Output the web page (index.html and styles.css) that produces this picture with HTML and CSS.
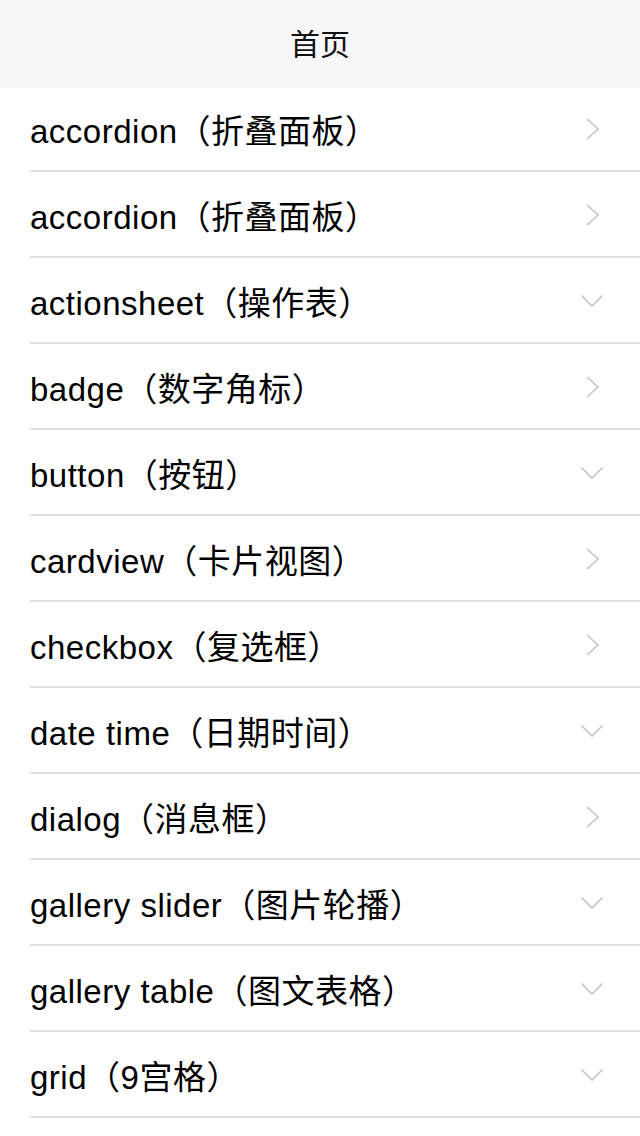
FILE: index.html
```html
<!DOCTYPE html>
<html lang="zh-CN">
<head>
<meta charset="utf-8">
<title>首页</title>
<link rel="stylesheet" href="styles.css">
</head>
<body>
<header class="bar"><h1 class="title">首页</h1></header>
<ul class="list">
  <li class="item"><span class="label">accordion（折叠面板）</span><svg class="chev" viewBox="0 0 24 24"><path d="M7 2 L18 12 L7 22"/></svg></li>
  <li class="item"><span class="label">accordion（折叠面板）</span><svg class="chev" viewBox="0 0 24 24"><path d="M7 2 L18 12 L7 22"/></svg></li>
  <li class="item"><span class="label">actionsheet（操作表）</span><svg class="chev" viewBox="0 0 24 24"><path d="M1.5 6.5 L12 17 L22.5 6.5"/></svg></li>
  <li class="item"><span class="label">badge（数字角标）</span><svg class="chev" viewBox="0 0 24 24"><path d="M7 2 L18 12 L7 22"/></svg></li>
  <li class="item"><span class="label">button（按钮）</span><svg class="chev" viewBox="0 0 24 24"><path d="M1.5 6.5 L12 17 L22.5 6.5"/></svg></li>
  <li class="item"><span class="label">cardview（卡片视图）</span><svg class="chev" viewBox="0 0 24 24"><path d="M7 2 L18 12 L7 22"/></svg></li>
  <li class="item"><span class="label">checkbox（复选框）</span><svg class="chev" viewBox="0 0 24 24"><path d="M7 2 L18 12 L7 22"/></svg></li>
  <li class="item"><span class="label">date time（日期时间）</span><svg class="chev" viewBox="0 0 24 24"><path d="M1.5 6.5 L12 17 L22.5 6.5"/></svg></li>
  <li class="item"><span class="label">dialog（消息框）</span><svg class="chev" viewBox="0 0 24 24"><path d="M7 2 L18 12 L7 22"/></svg></li>
  <li class="item"><span class="label">gallery slider（图片轮播）</span><svg class="chev" viewBox="0 0 24 24"><path d="M1.5 6.5 L12 17 L22.5 6.5"/></svg></li>
  <li class="item"><span class="label">gallery table（图文表格）</span><svg class="chev" viewBox="0 0 24 24"><path d="M1.5 6.5 L12 17 L22.5 6.5"/></svg></li>
  <li class="item"><span class="label">grid（9宫格）</span><svg class="chev" viewBox="0 0 24 24"><path d="M1.5 6.5 L12 17 L22.5 6.5"/></svg></li>
</ul>
</body>
</html>
```
FILE: styles.css
```css
html, body {
  margin: 0;
  padding: 0;
  background: #ffffff;
  font-family: "Liberation Sans", Arial, "Noto Sans CJK SC", sans-serif;
  color: #000;
  overflow: hidden;
}
.bar {
  height: 88px;
  background: #f7f7f7;
  display: flex;
  align-items: center;
  justify-content: center;
  padding-bottom: 4px;
  box-sizing: border-box;
}
.title {
  margin: 0;
  font-size: 30px;
  font-weight: normal;
  font-family: "Noto Sans CJK SC", sans-serif;
  color: #111;
}
.list {
  list-style: none;
  margin: 0;
  padding: 0 0 0 30px;
}
.item {
  border-bottom: 2px solid #e0e0e0;
  display: flex;
  align-items: center;
  padding: 2px 0 0 0;
  box-sizing: border-box;
  height: 86px;
}
.item:first-child {
  height: 84px;
  padding-top: 0;
}
.label {
  flex: 1;
  font-size: 33px;
  letter-spacing: 0.5px;
  white-space: nowrap;
}
.chev {
  width: 24px;
  height: 24px;
  margin-right: 36px;
  fill: none;
  stroke: #c4c4c9;
  stroke-width: 1.6;
}
```
